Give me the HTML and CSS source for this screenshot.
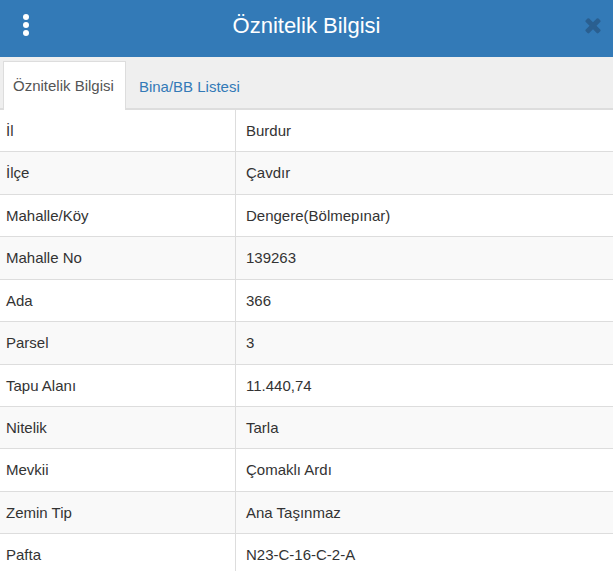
FILE: index.html
```html
<!DOCTYPE html>
<html lang="tr">
<head>
<meta charset="utf-8">
<title>Öznitelik Bilgisi</title>
<link rel="stylesheet" href="styles.css">
</head>
<body>
<div class="panel">
  <header class="header">
    <span class="menu" aria-label="menu">
      <span class="dot"></span><span class="dot"></span><span class="dot"></span>
    </span>
    <h1 class="title">Öznitelik Bilgisi</h1>
    <span class="close" aria-label="kapat">
      <svg viewBox="0 0 1408 1408" width="18" height="18"><path fill="currentColor" d="M1298 1054q0 40-28 68l-136 136q-28 28-68 28t-68-28L704 964l-294 294q-28 28-68 28t-68-28L138 1122q-28-28-28-68t28-68l294-294-294-294q-28-28-28-68t28-68l136-136q28-28 68-28t68 28l294 294 294-294q28-28 68-28t68 28l136 136q28 28 28 68t-28 68L976 692l294 294q28 28 28 68z"/></svg>
    </span>
  </header>
  <nav class="tabs">
    <span class="tab active">Öznitelik Bilgisi</span>
    <span class="tab">Bina/BB Listesi</span>
  </nav>
  <table class="attrs">
    <tbody>
      <tr><td>İl</td><td>Burdur</td></tr>
      <tr><td>İlçe</td><td>Çavdır</td></tr>
      <tr><td>Mahalle/Köy</td><td>Dengere(Bölmepınar)</td></tr>
      <tr><td>Mahalle No</td><td>139263</td></tr>
      <tr><td>Ada</td><td>366</td></tr>
      <tr><td>Parsel</td><td>3</td></tr>
      <tr><td>Tapu Alanı</td><td>11.440,74</td></tr>
      <tr><td>Nitelik</td><td>Tarla</td></tr>
      <tr><td>Mevkii</td><td>Çomaklı Ardı</td></tr>
      <tr><td>Zemin Tip</td><td>Ana Taşınmaz</td></tr>
      <tr><td>Pafta</td><td>N23-C-16-C-2-A</td></tr>
    </tbody>
  </table>
</div>
</body>
</html>
```

FILE: styles.css
```css
html, body {
  margin: 0;
  padding: 0;
  background: #fff;
}
body {
  font-family: "Liberation Sans", Arial, sans-serif;
  color: #333;
  font-size: 15px;
  line-height: 1.428571;
  overflow: hidden;
}
.panel {
  width: 613px;
}
.header {
  height: 57px;
  box-sizing: border-box;
  padding-bottom: 6px;
  background: #337ab7;
  display: flex;
  align-items: center;
  justify-content: center;
  position: relative;
}
.title {
  margin: 0;
  color: #fff;
  font-weight: normal;
  font-size: 22px;
  line-height: 1;
}
.menu {
  position: absolute;
  left: 23px;
  top: 14px;
  display: flex;
  flex-direction: column;
  gap: 2px;
}
.dot {
  width: 6px;
  height: 6px;
  border-radius: 50%;
  background: #fff;
}
.close {
  position: absolute;
  right: 11px;
  top: 17px;
  color: #2a5f90;
  display: flex;
}
.tabs {
  background: #efefef;
  border-bottom: 2px solid #ddd;
  display: flex;
  align-items: flex-end;
  padding: 4px 0 0 3px;
  height: 47px;
  box-sizing: content-box;
}
.tab {
  padding: 13px 11px 13px 9px;
  margin-right: 3px;
  margin-bottom: -2px;
  border: 1px solid transparent;
  border-bottom: none;
  color: #337ab7;
  white-space: nowrap;
}
.tab.active {
  background: #fff;
  border-color: #ddd;
  color: #555;
  padding-bottom: 14px;
}
.attrs {
  width: 100%;
  border-collapse: collapse;
}
.attrs td {
  padding: 10px 10px;
  border-top: 1px solid #ddd;
  vertical-align: top;
}
.attrs tr:first-child td {
  border-top: none;
}
.attrs td:first-child {
  width: 219px;
  padding-left: 6px;
  border-right: 1px solid #ddd;
}
.attrs tr:nth-child(even) td {
  background: #f9f9f9;
}
```
